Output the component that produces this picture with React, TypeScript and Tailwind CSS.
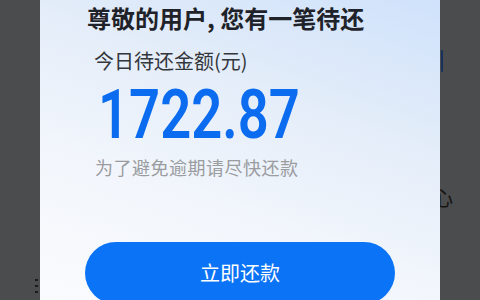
import React from 'react'

const cjk = "'Noto Sans CJK SC', 'Noto Sans', sans-serif"

const App: React.FC = () => {
    return (
        <div className="relative w-[480px] h-[300px] overflow-hidden bg-[#4b4c4d]" style={{ fontFamily: cjk }}>
            {/* page under the overlay */}
            <div className="absolute left-[441px] top-[50px] w-[2px] h-[22px] rounded-sm bg-[#17305c]"></div>
            <div className="absolute left-[433px] top-[188px] text-[20px] leading-none text-[#141414]">心</div>
            <div className="absolute left-[35px] top-[279px] flex flex-col gap-[4px]">
                <div className="w-[3px] h-[2px] bg-[#1a1a1a]"></div>
                <div className="w-[3px] h-[2px] bg-[#1a1a1a]"></div>
                <div className="w-[3px] h-[2px] bg-[#1a1a1a]"></div>
            </div>

            {/* dialog */}
            <div className="relative z-10 ml-10 w-[400px] h-[300px] flex flex-col bg-[linear-gradient(200deg,#cfe2fb_0%,#e4edf9_35%,#f2f6fc_65%,#fafbfd_100%)]">
                <div className="pl-[47px] pt-[4px] text-[24px] leading-[28px] font-bold text-[#1f2329]">
                    尊敬的用户, 您有一笔待还
                </div>
                <div className="pl-[54px] mt-[15px] text-[20px] leading-[28px] text-[#33363b]">
                    今日待还金额(元)
                </div>
                <div
                    className="pl-[58px] mt-[8px] text-[68px] leading-[64px] font-semibold text-[#0b6cf0]"
                    style={{ fontFamily: "Roboto, 'Liberation Sans', sans-serif" }}
                >
                    <span className="inline-block origin-left scale-x-[0.8]">1722.87</span>
                </div>
                <div className="pl-[55px] mt-[7px] text-[18px] leading-[26px] tracking-[0.5px] text-[#9a9ca0]">
                    为了避免逾期请尽快还款
                </div>
                <div className="flex justify-center mt-[62px]">
                    <button className="w-[310px] h-[62px] rounded-full bg-[#0b73f5] text-white text-[20px] leading-none">
                        立即还款
                    </button>
                </div>
            </div>
        </div>
    )
}

export default App
